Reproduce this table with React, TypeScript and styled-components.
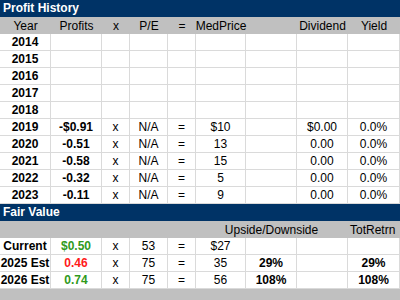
import React from "react";
import styled, { createGlobalStyle } from "styled-components";

const GlobalStyle = createGlobalStyle`
  html, body {
    margin: 0;
    padding: 0;
    background: #ffffff;
  }
  body {
    font-family: "Liberation Sans", Arial, sans-serif;
    font-size: 12px;
    color: #000;
  }
`;

const COLS = "51px 51px 28px 38px 28px 50px 51px 51px 52px";

const Sheet = styled.div`
  width: 400px;
  height: 300px;
  overflow: hidden;
  display: flex;
  flex-direction: column;
`;

const SectionTitle = styled.div`
  height: 17px;
  line-height: 17px;
  background: #003366;
  color: #ffffff;
  font-weight: 700;
  padding-left: 3px;
  white-space: nowrap;
`;

const Row = styled.div<{ $band?: boolean }>`
  display: grid;
  grid-template-columns: ${COLS};
  height: 17px;
  background: ${(p) => (p.$band ? "#c0c0c0" : "#ffffff")};
`;

const Cell = styled.div<{ $bold?: boolean; $color?: string; $grid?: boolean; $left?: boolean }>`
  display: flex;
  justify-content: ${(p) => (p.$left ? "flex-start" : "center")};
  align-items: center;
  box-sizing: border-box;
  height: 17px;
  line-height: 17px;
  padding-top: 1px;
  padding-left: ${(p) => (p.$left ? "2px" : "0")};
  white-space: nowrap;
  font-weight: ${(p) => (p.$bold ? 700 : 400)};
  color: ${(p) => p.$color || "#000"};
  border-right: ${(p) => (p.$grid ? "1px solid #dadada" : "none")};
  border-bottom: ${(p) => (p.$grid ? "1px solid #dadada" : "none")};
`;

type Val = { t: string; b?: boolean; c?: string };

const GREEN = "#2f9a1c";
const RED = "#ff1a1a";

const history: Val[][] = [
  [{ t: "2014", b: true }],
  [{ t: "2015", b: true }],
  [{ t: "2016", b: true }],
  [{ t: "2017", b: true }],
  [{ t: "2018", b: true }],
  ...[
    ["2019", "-$0.91", "$10", "$0.00"],
    ["2020", "-0.51", "13", "0.00"],
    ["2021", "-0.58", "15", "0.00"],
    ["2022", "-0.32", "5", "0.00"],
    ["2023", "-0.11", "9", "0.00"],
  ].map(([y, p, m, d]) => [
    { t: y, b: true },
    { t: p, b: true },
    { t: "x" },
    { t: "N/A" },
    { t: "=" },
    { t: m },
    { t: "" },
    { t: d },
    { t: "0.0%" },
  ]),
];

const fair: Val[][] = [
  [
    { t: "Current", b: true },
    { t: "$0.50", b: true, c: GREEN },
    { t: "x" },
    { t: "53" },
    { t: "=" },
    { t: "$27" },
    { t: "" },
    { t: "" },
    { t: "" },
  ],
  [
    { t: "2025 Est", b: true },
    { t: "0.46", b: true, c: RED },
    { t: "x" },
    { t: "75" },
    { t: "=" },
    { t: "35" },
    { t: "29%", b: true },
    { t: "" },
    { t: "29%", b: true },
  ],
  [
    { t: "2026 Est", b: true },
    { t: "0.74", b: true, c: GREEN },
    { t: "x" },
    { t: "75" },
    { t: "=" },
    { t: "56" },
    { t: "108%", b: true },
    { t: "" },
    { t: "108%", b: true },
  ],
];

const DataRow: React.FC<{ vals: Val[] }> = ({ vals }) => (
  <Row>
    {Array.from({ length: 9 }).map((_, i) => {
      const v = vals[i] || { t: "" };
      return (
        <Cell key={i} $grid $bold={v.b} $color={v.c}>
          {v.t}
        </Cell>
      );
    })}
  </Row>
);

const BandRow: React.FC<{ labels: string[]; leftFrom?: number }> = ({ labels, leftFrom }) => (
  <Row $band>
    {labels.map((l, i) => (
      <Cell key={i} $left={leftFrom !== undefined && i >= leftFrom}>
        {l}
      </Cell>
    ))}
  </Row>
);

export default function App() {
  return (
    <>
      <GlobalStyle />
      <Sheet>
        <SectionTitle>Profit History</SectionTitle>
        <BandRow
          labels={["Year", "Profits", "x", "P/E", "=", "MedPrice", "", "Dividend", "Yield"]}
        />
        {history.map((r, i) => (
          <DataRow key={i} vals={r} />
        ))}
        <SectionTitle>Fair Value</SectionTitle>
        <BandRow
          labels={["", "", "", "", "", "", "Upside/Downside", "", "TotRetrn"]}
          leftFrom={8}
        />
        {fair.map((r, i) => (
          <DataRow key={i} vals={r} />
        ))}
        <BandRow labels={["", "", "", "", "", "", "", "", ""]} />
      </Sheet>
    </>
  );
}
